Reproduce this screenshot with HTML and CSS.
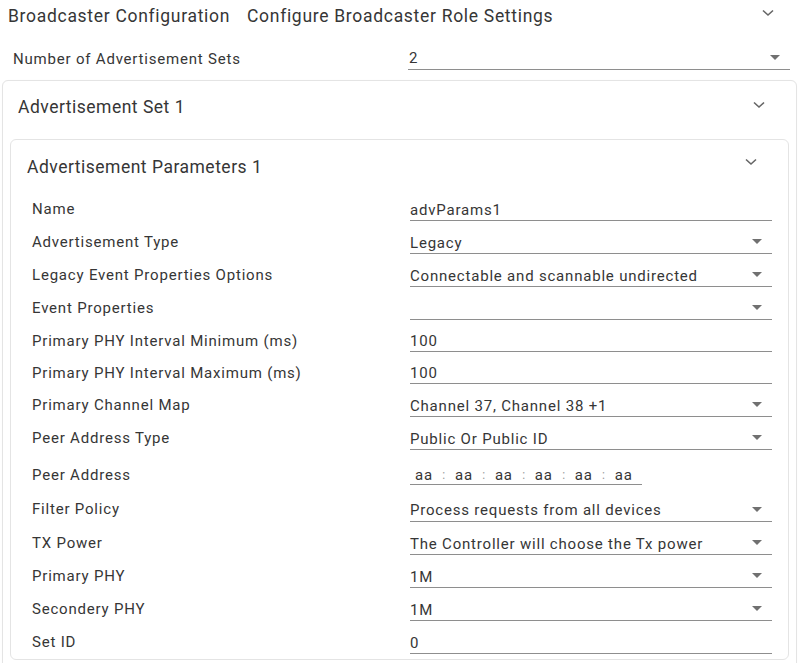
FILE: index.html
```html
<!DOCTYPE html>
<html>
<head>
<meta charset="utf-8">
<link rel="stylesheet" href="styles.css">
</head>
<body>
<div class="top-header">
  <span class="top-title">Broadcaster Configuration</span>
  <span class="top-sub">Configure Broadcaster Role Settings</span>
  <svg class="chev top-chev" width="12" height="8" viewBox="0 0 12 8"><path d="M1 1.5 L6 6 L11 1.5" fill="none" stroke="#666" stroke-width="1.6"/></svg>
</div>
<div class="num-row">
  <span class="num-label">Number of Advertisement Sets</span>
  <div class="num-value"><span>2</span><span class="tri"></span></div>
</div>
<div class="card outer">
  <div class="card-head outer-head">
    <span>Advertisement Set 1</span>
    <svg class="chev" width="12" height="8" viewBox="0 0 12 8"><path d="M1 1.5 L6 6 L11 1.5" fill="none" stroke="#666" stroke-width="1.6"/></svg>
  </div>
  <div class="card inner">
    <div class="card-head inner-head">
      <span>Advertisement Parameters 1</span>
      <svg class="chev" width="12" height="8" viewBox="0 0 12 8"><path d="M1 1.5 L6 6 L11 1.5" fill="none" stroke="#666" stroke-width="1.6"/></svg>
    </div>
    <div class="rows">
      <div class="row"><span class="lbl">Name</span><div class="val"><span>advParams1</span></div></div>
      <div class="row"><span class="lbl">Advertisement Type</span><div class="val"><span>Legacy</span><span class="tri"></span></div></div>
      <div class="row"><span class="lbl">Legacy Event Properties Options</span><div class="val"><span>Connectable and scannable undirected</span><span class="tri"></span></div></div>
      <div class="row"><span class="lbl">Event Properties</span><div class="val"><span></span><span class="tri"></span></div></div>
      <div class="row short"><span class="lbl">Primary PHY Interval Minimum (ms)</span><div class="val"><span>100</span></div></div>
      <div class="row short"><span class="lbl">Primary PHY Interval Maximum (ms)</span><div class="val"><span>100</span></div></div>
      <div class="row"><span class="lbl">Primary Channel Map</span><div class="val"><span>Channel 37, Channel 38 +1</span><span class="tri"></span></div></div>
      <div class="row"><span class="lbl">Peer Address Type</span><div class="val"><span>Public Or Public ID</span><span class="tri"></span></div></div>
      <div class="row peer-row"><span class="lbl">Peer Address</span>
        <div class="val addr">
          <span class="oct">aa</span><span class="sep">:</span><span class="oct">aa</span><span class="sep">:</span><span class="oct">aa</span><span class="sep">:</span><span class="oct">aa</span><span class="sep">:</span><span class="oct">aa</span><span class="sep">:</span><span class="oct">aa</span>
        </div>
      </div>
      <div class="row filter-row"><span class="lbl">Filter Policy</span><div class="val"><span>Process requests from all devices</span><span class="tri"></span></div></div>
      <div class="row"><span class="lbl">TX Power</span><div class="val"><span>The Controller will choose the Tx power</span><span class="tri"></span></div></div>
      <div class="row"><span class="lbl">Primary PHY</span><div class="val"><span>1M</span><span class="tri"></span></div></div>
      <div class="row"><span class="lbl">Secondery PHY</span><div class="val"><span>1M</span><span class="tri"></span></div></div>
      <div class="row"><span class="lbl">Set ID</span><div class="val"><span>0</span></div></div>
    </div>
  </div>
</div>
</body>
</html>
```

FILE: styles.css
```css
* { box-sizing: border-box; }
html, body { margin: 0; padding: 0; background: #fff; }
body {
  font-family: Roboto, "Liberation Sans", sans-serif;
  color: #363636;
  width: 799px;
  height: 663px;
  overflow: hidden;
}
.top-header {
  display: flex;
  align-items: center;
  height: 32px;
  padding: 0 25px 0 8px;
  font-size: 17.5px;
  letter-spacing: 0.7px;
}
.top-title { width: 239px; }
.top-sub { flex: 1; }
.top-chev { margin-top: -6px; }
.num-row {
  display: flex;
  align-items: flex-end;
  height: 38px;
  padding: 0 9px 0 13px;
  font-size: 15px;
  letter-spacing: 0.8px;
}
.num-label { width: 395px; padding-bottom: 2px; }
.num-value {
  flex: 1;
  display: flex;
  justify-content: space-between;
  align-items: center;
  height: 24px;
  border-bottom: 1px solid #8e8e8e;
  padding: 0 10px 0 1px;
}
.tri {
  width: 0; height: 0;
  border-left: 5px solid transparent;
  border-right: 5px solid transparent;
  border-top: 5px solid #707070;
}
.card {
  border: 1px solid #e4e4e4;
  border-radius: 6px;
  background: #fff;
}
.outer {
  margin: 10px 2px 0 2px;
  height: 620px;
  box-shadow: 0 0 1px rgba(0,0,0,0.04);
}
.card-head {
  display: flex;
  justify-content: space-between;
  align-items: center;
  font-size: 17.5px;
  letter-spacing: 0.5px;
}
.outer-head {
  height: 51px;
  padding: 0 31px 0 15px;
}
.outer-head .chev { margin-top: -4px; }
.inner {
  margin: 7px 7px 0 7px;
  height: 521px;
}
.inner-head {
  height: 48px;
  padding: 5px 31px 0 16px;
}
.inner-head .chev { margin-top: -10px; }
.rows { padding: 0 16px 0 21px; }
.row {
  display: grid;
  grid-template-columns: 378px 1fr;
  height: 33px;
  font-size: 15px;
  letter-spacing: 0.8px;
}
.lbl { padding-top: 11px; line-height: 20px; }
.val {
  display: flex;
  justify-content: space-between;
  align-items: center;
  border-bottom: 1px solid #8e8e8e;
  padding: 11px 10px 0 0;
  height: 33px;
  line-height: 20px;
}
.val .tri { margin-top: -2px; }
.short { height: 32px; }
.short .val { height: 32px; }
.peer-row { height: 35px; }
.peer-row .lbl { padding-top: 15px; }
.addr {
  justify-content: flex-start;
  width: 232px;
  height: 35px;
  padding: 15px 0 0 5px;
}
.oct { width: 28px; }
.sep { width: 13px; color: #9a9a9a; font-size: 12px; }
.filter-row { height: 37px; }
.filter-row .lbl { padding-top: 14px; }
.filter-row .val { height: 37px; padding-top: 14px; }
```
